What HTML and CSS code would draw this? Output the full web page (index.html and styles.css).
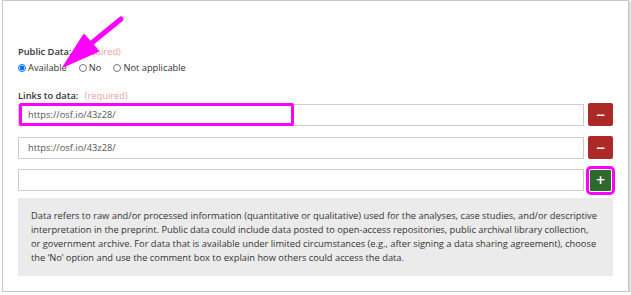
FILE: index.html
```html
<!DOCTYPE html>
<html lang="en">
<head>
    <meta charset="UTF-8">
    <title>Public Data</title>
    <link rel="stylesheet" href="styles.css">
</head>
<body>

    <div class="panel">

        <div class="field">
            <p class="label">Public Data: <span class="req">(required)</span></p>
            <div class="radios">
                <label><input type="radio" name="pd" checked> Available</label>
                <label><input type="radio" name="pd"> No</label>
                <label><input type="radio" name="pd"> Not applicable</label>
            </div>
        </div>

        <div class="field links">
            <p class="label">Links to data: <span class="req">(required)</span></p>

            <div class="row">
                <div class="box">
                    <input type="text" value="https://osf.io/43z28/">
                    <span class="mark"></span>
                </div>
                <button class="btn remove">&minus;</button>
            </div>

            <div class="row">
                <div class="box">
                    <input type="text" value="https://osf.io/43z28/">
                </div>
                <button class="btn remove">&minus;</button>
            </div>

            <div class="row">
                <div class="box">
                    <input type="text" value="">
                </div>
                <button class="btn add">+</button>
            </div>
        </div>

        <div class="help">
            Data refers to raw and/or processed information (quantitative or qualitative) used for the analyses, case studies, and/or descriptive<br>
            interpretation in the preprint. Public data could include data posted to open-access repositories, public archival library collection,<br>
            or government archive. For data that is available under limited circumstances (e.g., after signing a data sharing agreement), choose<br>
            the ‘No’ option and use the comment box to explain how others could access the data.
        </div>

        <!-- annotation arrow -->
        <svg class="arrow" width="140" height="90" viewBox="0 0 140 90">
            <line x1="121" y1="19" x2="88" y2="46" stroke="#ff00ff" stroke-width="5" stroke-linecap="round"/>
            <polygon points="64,66 84,35 98,51" fill="#ff00ff" stroke="#ff00ff" stroke-width="2" stroke-linejoin="round"/>
        </svg>

    </div>

</body>
</html>
```

FILE: styles.css
```css
html, body {
    margin: 0;
    background: #fff;
}

.panel {
    position: relative;
    box-sizing: border-box;
    width: 627px;
    height: 292px;
    margin-left: 2px;
    padding: 44px 15px 0 15px;
    border: 1px solid #c8c8c8;
    box-shadow: 1px 1px 2px rgba(0, 0, 0, 0.25);
    font-family: "Open Sans", "DejaVu Sans", sans-serif;
    font-size: 9.3px;
    color: #333;
}

.label {
    margin: 0;
    font-weight: 600;
    line-height: 14px;
}

.req {
    margin-left: 4px;
    font-weight: 400;
    color: #f0a0a0;
}

.radios {
    display: flex;
    gap: 12px;
    margin-top: 2px;
    line-height: 14px;
}

.radios label {
    display: flex;
    align-items: center;
    gap: 2px;
}

.radios input {
    width: 8px;
    height: 8px;
    margin: 0;
}

.links {
    margin-top: 14px;
}

.row {
    display: flex;
    align-items: center;
    gap: 4px;
    margin-top: 0;
    margin-bottom: 10px;
}

.row + .row {
    margin-top: 1px;
}

.box {
    position: relative;
    flex: 1;
}

.box input {
    display: block;
    box-sizing: border-box;
    width: 100%;
    height: 22px;
    padding: 0 9px;
    border: 1px solid #ccc;
    font-family: inherit;
    font-size: 9.3px;
    color: #555;
}

.mark {
    position: absolute;
    left: 1px;
    top: -1px;
    width: 275px;
    height: 23px;
    box-sizing: border-box;
    border: 3px solid #ff00ff;
    border-radius: 2px;
}

.btn {
    box-sizing: border-box;
    width: 25px;
    height: 23px;
    padding: 0;
    border: none;
    border-radius: 2px;
    color: #fff;
    font-family: "DejaVu Sans", sans-serif;
    font-size: 12px;
    font-weight: bold;
}

.remove {
    background: #ab2a27;
}

.add {
    width: 21px;
    height: 21px;
    margin: 0 2px;
    background: #2e6a2e;
    outline: 3px solid #ff00ff;
    outline-offset: 1px;
    border-radius: 1px;
}

.help {
    margin-top: -3px;
    padding: 11px 13px 11px 13px;
    background: #ebebeb;
    line-height: 14px;
    white-space: nowrap;
}

.arrow {
    position: absolute;
    left: -3px;
    top: -1px;
}
```
